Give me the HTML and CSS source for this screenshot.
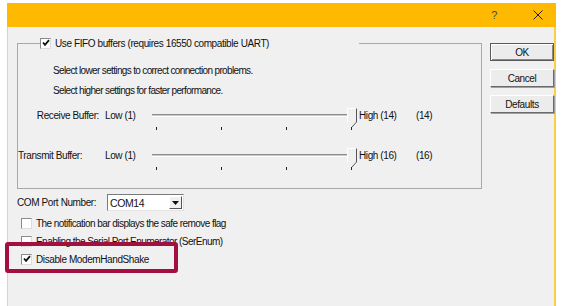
FILE: index.html
```html
<!DOCTYPE html>
<html lang="en">
<head>
    <meta charset="UTF-8">
    <meta name="viewport" content="width=device-width, initial-scale=1.0">
    <title>Advanced Settings for COM14</title>
    <link rel="stylesheet" href="styles.css">
</head>
<body>
    <div class="window">
        <div class="titlebar">
            <span class="help">?</span>
            <svg class="close" width="10" height="10" viewBox="0 0 10 10">
                <path d="M0.5 0.5 L9.5 9.5 M9.5 0.5 L0.5 9.5" stroke="#222" stroke-width="1" fill="none"/>
            </svg>
        </div>
        <div class="content">
            <div class="main">
                <fieldset class="group">
                    <legend class="group-title">
                        <span class="box checked">
                            <svg width="8" height="8" viewBox="0 0 8 8"><path d="M1 3.5 L3 5.8 L7 1.2" stroke="#111" stroke-width="1.8" fill="none"/></svg>
                        </span>
                        <span>Use FIFO buffers (requires 16550 compatible UART)</span>
                    </legend>
                    <p class="hint first">Select lower settings to correct connection problems.</p>
                    <p class="hint">Select higher settings for faster performance.</p>

                    <div class="slider-row">
                        <span class="row-label right">Receive Buffer:</span>
                        <span class="low">Low (1)</span>
                        <div class="slider">
                            <div class="track"></div>
                            <span class="tick t1"></span><span class="tick t2"></span><span class="tick t3"></span><span class="tick t4"></span>
                            <svg class="thumb" width="10" height="20" viewBox="0 0 10 20">
                                <polygon points="0.5,0.5 9.5,0.5 9.5,14 5,19 0.5,14" fill="#f0f0f0"/>
                                <polyline points="0.5,14 0.5,0.5 9.5,0.5" stroke="#fff" fill="none"/>
                                <polyline points="9.5,0.5 9.5,14 5,19" stroke="#555" fill="none"/>
                            </svg>
                        </div>
                        <span class="high">High (14)</span>
                        <span class="value">(14)</span>
                    </div>

                    <div class="slider-row second">
                        <span class="row-label">Transmit Buffer:</span>
                        <span class="low">Low (1)</span>
                        <div class="slider">
                            <div class="track"></div>
                            <span class="tick t1"></span><span class="tick t2"></span><span class="tick t3"></span><span class="tick t4"></span>
                            <svg class="thumb" width="10" height="20" viewBox="0 0 10 20">
                                <polygon points="0.5,0.5 9.5,0.5 9.5,14 5,19 0.5,14" fill="#f0f0f0"/>
                                <polyline points="0.5,14 0.5,0.5 9.5,0.5" stroke="#fff" fill="none"/>
                                <polyline points="9.5,0.5 9.5,14 5,19" stroke="#555" fill="none"/>
                            </svg>
                        </div>
                        <span class="high">High (16)</span>
                        <span class="value">(16)</span>
                    </div>
                </fieldset>

                <div class="com-row">
                    <span class="com-label">COM Port Number:</span>
                    <div class="combo">
                        <span class="combo-text">COM14</span>
                        <span class="combo-arrow">
                            <svg width="7" height="4" viewBox="0 0 7 4"><polygon points="0,0 7,0 3.5,4" fill="#111"/></svg>
                        </span>
                    </div>
                </div>

                <div class="check-row first">
                    <span class="box"></span>
                    <span class="tight">The notification bar displays the safe remove flag</span>
                </div>
                <div class="check-row">
                    <span class="box"></span>
                    <span class="tight">Enabling the Serial Port Enumerator (SerEnum)</span>
                </div>
                <div class="check-row">
                    <span class="box checked">
                        <svg width="8" height="8" viewBox="0 0 8 8"><path d="M1 3.5 L3 5.8 L7 1.2" stroke="#111" stroke-width="1.8" fill="none"/></svg>
                    </span>
                    <span>Disable ModemHandShake</span>
                </div>
            </div>

            <div class="buttons">
                <button class="btn default">OK</button>
                <button class="btn">Cancel</button>
                <button class="btn">Defaults</button>
            </div>
        </div>
    </div>

    <div class="highlight"></div>
</body>
</html>
```

FILE: styles.css
```css
body {
    margin: 0;
    background: #fff;
    font-family: "Liberation Sans", Arial, sans-serif;
    font-size: 10px;
    letter-spacing: -0.4px;
    color: #111;
    height: 306px;
    overflow: hidden;
}
.window {
    margin: 3px 0 0 7px;
    width: 549px;
    height: 303px;
    display: flex;
    flex-direction: column;
}
.titlebar {
    height: 24px;
    background: #ffb900;
    display: flex;
    align-items: center;
    justify-content: flex-end;
    padding-right: 13px;
}
.help {
    font-size: 11px;
    margin-right: 36px;
    color: #444;
}
.content {
    flex: 1;
    background: #f0f0f0;
    border-left: 1px solid #f3d57a;
    border-right: 2px solid #f8cf45;
    display: flex;
}
.main {
    width: 474px;
    padding-left: 9px;
}

/* group box */
.group {
    margin: 10px 0 0;
    padding: 0 0 18px 0;
    width: 465px;
    height: 152px;
    box-sizing: border-box;
    border: 1px solid #a8a8a8;
    min-inline-size: 0;
}
.group-title {
    display: flex;
    align-items: center;
    height: 12px;
    padding: 0 90px 0 0;
    margin-left: 22px;
}
.hint {
    margin: 6px 0 0 35px;
    line-height: 14px;
    letter-spacing: -0.65px;
}
.hint.first {
    margin-top: 15px;
}
.tight {
    letter-spacing: -0.55px;
}
.slider-row {
    display: flex;
    align-items: flex-start;
    height: 24px;
    margin-top: 8px;
}
.slider-row.second {
    margin-top: 16px;
}
.slider-row > span {
    line-height: 14px;
    margin-top: 3px;
}
.row-label {
    width: 82px;
}
.row-label.right {
    text-align: right;
    padding-right: 1px;
    width: 81px;
}
.low {
    margin-left: 5px;
    width: 47px;
}
.high {
    margin-left: 3px;
    width: 57px;
}
.slider {
    position: relative;
    width: 204px;
    height: 24px;
}
.track {
    margin-top: 8px;
    width: 200px;
    height: 1px;
    border-top: 1px solid #8c8c8c;
    border-bottom: 1px solid #fff;
    background: #c9c9c9;
}
.tick {
    position: absolute;
    top: 21px;
    width: 1px;
    height: 3px;
    background: #222;
}
.t1 { left: 4px; }
.t2 { left: 69px; }
.t3 { left: 134px; }
.t4 { left: 199px; }
.thumb {
    position: absolute;
    left: 195px;
    top: 2px;
}

/* checkboxes */
.box {
    width: 11px;
    height: 11px;
    box-sizing: border-box;
    background: #fff;
    border: 1px solid #8a8a8a;
    border-right-color: #dcdcdc;
    border-bottom-color: #dcdcdc;
    display: inline-flex;
    align-items: center;
    justify-content: center;
    margin-right: 4px;
}
.com-row {
    display: flex;
    align-items: center;
    height: 17px;
    margin-top: 5px;
}
.com-label {
    width: 90px;
}
.combo {
    width: 77px;
    height: 17px;
    box-sizing: border-box;
    background: #fff;
    border: 1px solid #7a7a7a;
    border-right-color: #e3e3e3;
    border-bottom-color: #e3e3e3;
    display: flex;
    align-items: center;
    justify-content: space-between;
    padding: 0 1px 0 2px;
}
.combo-text {
    font-size: 10.5px;
}
.combo-arrow {
    width: 13px;
    height: 13px;
    box-sizing: border-box;
    background: #f0f0f0;
    border: 1px solid #fff;
    border-right-color: #555;
    border-bottom-color: #555;
    display: flex;
    align-items: center;
    justify-content: center;
}
.check-row {
    display: flex;
    align-items: center;
    height: 18px;
    padding-left: 4px;
}
.check-row.first {
    margin-top: 3px;
}

/* buttons */
.buttons {
    display: flex;
    flex-direction: column;
    gap: 8px;
    margin: 16px 0 0 4px;
}
.btn {
    width: 64px;
    height: 18px;
    padding: 0;
    font-family: "Liberation Sans", Arial, sans-serif;
    font-size: 10px;
    letter-spacing: -0.4px;
    color: #111;
    background: #ececec;
    border: 1px solid #fff;
    border-right-color: #6a6a6a;
    border-bottom-color: #6a6a6a;
    box-shadow: 1px 1px 0 #a0a0a0;
}
.btn.default {
    border: 1px solid #5a5a5a;
    box-shadow: inset 1px 1px 0 #fff, inset -1px -1px 0 #888;
}

/* annotation */
.highlight {
    position: absolute;
    left: 5px;
    top: 242px;
    width: 173px;
    height: 31px;
    box-sizing: border-box;
    border: 4px solid #a3103f;
    border-radius: 3px;
}
```
